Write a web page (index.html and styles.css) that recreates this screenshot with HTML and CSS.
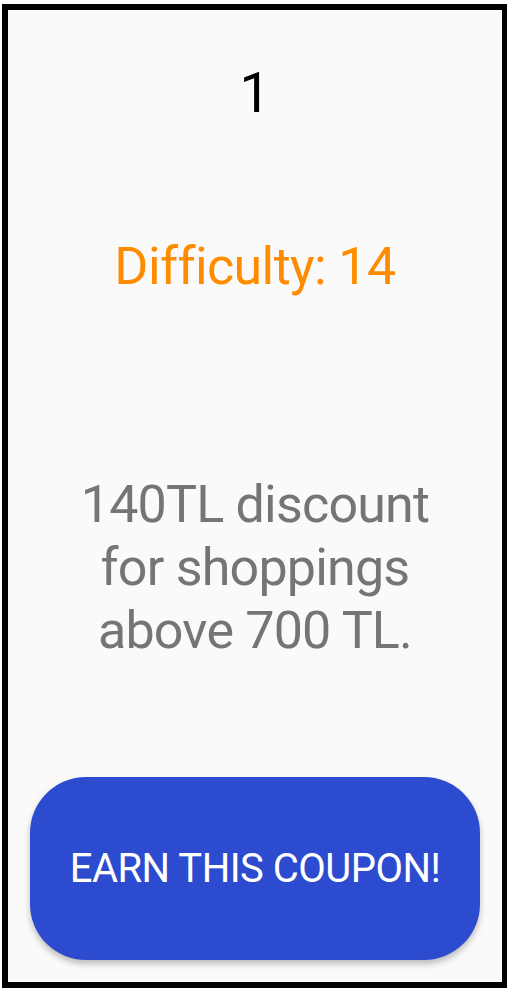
FILE: index.html
```html
<!DOCTYPE html>
<html lang="en">
<head>
<meta charset="utf-8">
<title>Coupon</title>
<link rel="stylesheet" href="styles.css">
</head>
<body>
<div class="frame">
  <div class="level">1</div>
  <div class="difficulty">Difficulty: 14</div>
  <div class="desc">140TL discount<br>for shoppings<br>above 700 TL.</div>
  <button class="earn">EARN THIS COUPON!</button>
</div>
</body>
</html>
```

FILE: styles.css
```css
html, body {
  margin: 0;
  padding: 0;
  background: #ffffff;
  overflow: hidden;
}
body {
  font-family: Roboto, "Open Sans", sans-serif;
}
.frame {
  box-sizing: border-box;
  margin: 4px 0 0 2px;
  width: 506px;
  height: 984px;
  border: 6px solid #000;
  background: #fafafa;
  display: flex;
  flex-direction: column;
  align-items: center;
  padding: 51px 22px 22px;
}
.level {
  font-size: 55px;
  line-height: 64px;
  color: #000;
}
.difficulty {
  margin-top: 112px;
  font-size: 52px;
  line-height: 60px;
  letter-spacing: -0.6px;
  color: #ff8c00;
}
.desc {
  margin-top: 176px;
  font-size: 52px;
  line-height: 63px;
  letter-spacing: -0.8px;
  color: #757575;
  text-align: center;
}
.earn {
  margin-top: auto;
  width: 100%;
  height: 183px;
  border: none;
  border-radius: 56px;
  background: #2c4bcf;
  color: #fff;
  font-family: inherit;
  font-size: 40px;
  letter-spacing: -0.5px;
  box-shadow: 0 4px 6px rgba(0,0,0,0.25);
  padding: 0;
}
```
